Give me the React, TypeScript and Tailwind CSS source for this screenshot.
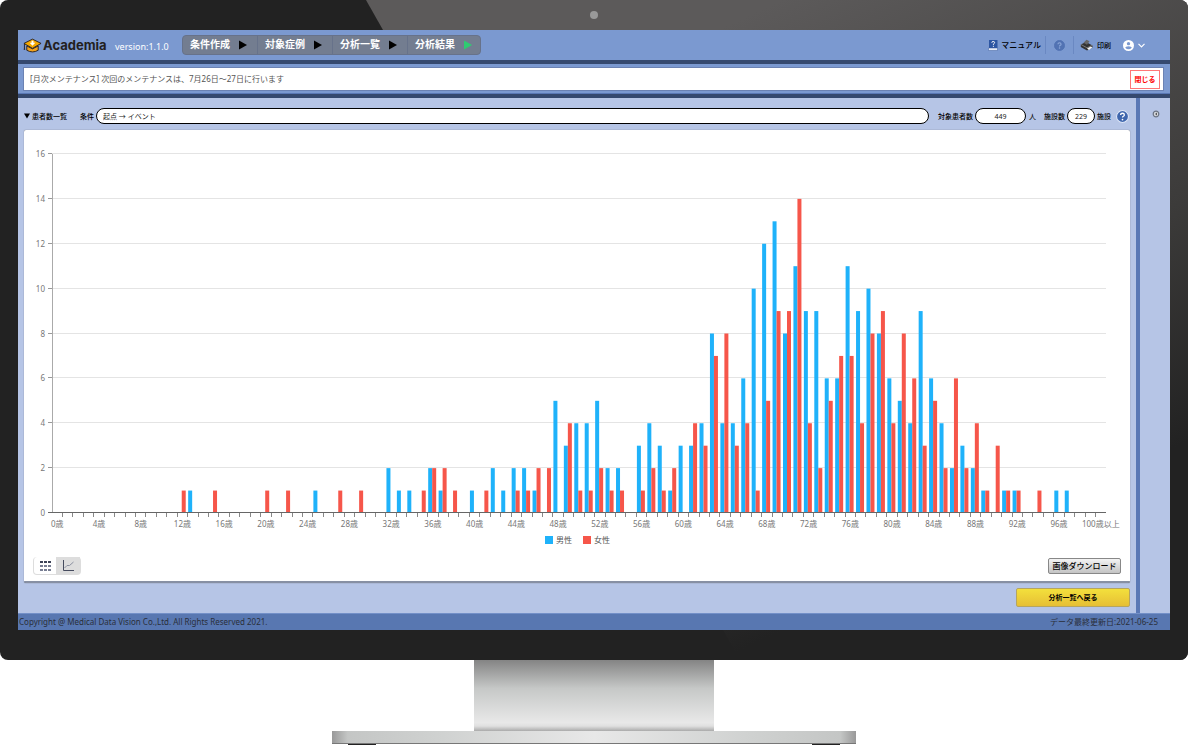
import { FC, ReactNode } from "react"

const men: Record<number, number> = {
  13: 1, 25: 1, 32: 2, 33: 1, 34: 1, 36: 2, 37: 1, 40: 1, 42: 2, 43: 1, 44: 2, 45: 2, 46: 1, 48: 5, 49: 3,
  50: 4, 51: 4, 52: 5, 53: 2, 54: 2, 56: 3, 57: 4, 58: 3, 59: 1, 60: 3, 61: 3, 62: 4, 63: 8, 64: 4, 65: 4,
  66: 6, 67: 10, 68: 12, 69: 13, 70: 8, 71: 11, 72: 9, 73: 9, 74: 6, 75: 6, 76: 11, 77: 9, 78: 10, 79: 8,
  80: 6, 81: 5, 82: 4, 83: 9, 84: 6, 85: 4, 86: 2, 87: 3, 88: 2, 89: 1, 91: 1, 92: 1, 96: 1, 97: 1
}

const women: Record<number, number> = {
  12: 1, 15: 1, 20: 1, 22: 1, 27: 1, 29: 1, 35: 1, 36: 2, 37: 2, 38: 1, 41: 1, 44: 1, 45: 1, 46: 2, 47: 2,
  49: 4, 50: 1, 51: 1, 52: 2, 53: 1, 54: 1, 56: 1, 57: 2, 58: 1, 59: 2, 61: 4, 62: 3, 63: 7, 64: 8, 65: 3,
  66: 4, 67: 1, 68: 5, 69: 9, 70: 9, 71: 14, 72: 4, 73: 2, 74: 5, 75: 7, 76: 7, 77: 4, 78: 8, 79: 9, 80: 4,
  81: 8, 82: 6, 83: 3, 84: 5, 85: 2, 86: 6, 87: 2, 88: 4, 89: 1, 90: 3, 91: 1, 92: 1, 94: 1
}

const steps = ["条件作成", "対象症例", "分析一覧", "分析結果"]

const Logo: FC = () => (
  <a href="#" className="flex items-center gap-px text-[#231f20]">
    <svg width="19" height="15" viewBox="0 0 20 15">
      <path d="M4 8v4.500q6 3.500 12 0V8l-6 3z" fill="#f3a21b" stroke="#2b2320" />
      <path d="M10 .8 19 5.300 10 10.500 1 5.300z" fill="#f5a800" stroke="#2b2320" />
      <path d="M1.500 5.500v6M.8 11.500h1.500" stroke="#2b2320" />
      <path d="M9 2.500h2v2h2L10 7.800 7 4.500h2z" fill="#fff" />
    </svg>
    <span className="w-16 font-[Inter,sans-serif] text-[13px] font-bold leading-4">Academia</span>
  </a>
)

const HelpIcon: FC<{ size: number; fill: string; color: string; ring?: string }> = ({ size, fill, color, ring }) => (
  <svg width={size} height={size} viewBox="0 0 12 12">
    <circle cx="6" cy="6" r="5.500" fill={fill} stroke={ring ?? fill} />
    <path d="M4.300 4.700q0-1.700 1.700-1.700t1.700 1.500q0 .8-.9 1.300-.8.500-.8 1.200" fill="none" stroke={color} strokeWidth="1.200" />
    <circle cx="6" cy="8.800" r=".8" fill={color} />
  </svg>
)

const Header: FC = () => (
  <header className="flex h-[34px] items-center justify-between border-b-4 border-[#35496f] bg-[#7b99d0] pl-[5px] pr-[25px]">
    <div className="flex items-center">
      <Logo />
      <span className="ml-2 mt-0.5 w-[67px] text-[9px] text-white">version:1.1.0</span>
      <nav className="flex overflow-hidden rounded-sm border border-[#67728a] bg-[#737d90]">
        {steps.map((step, i) => (
          <button key={step} className="flex h-[18px] items-center gap-[9px] border-r border-[#67728a] pl-[7px] pr-2.5 text-[10px] font-bold leading-none text-white last:border-r-0 last:pr-2">
            <span className="mb-0.5">{step}</span>
            <svg width="8" height="10" viewBox="0 0 8 10">
              <path d="M0 0.500 8 5 0 9.500z" fill={i === 3 ? "#2ecc71" : "#000"} />
            </svg>
          </button>
        ))}
      </nav>
    </div>
    <div className="flex items-center text-black">
      <a href="#" className="flex items-center gap-[3px] pr-1 text-[8px] font-medium">
        <svg width="10" height="11" viewBox="0 0 10 11">
          <path d="M1 0h8.500v8H1z" fill="#2d56a3" />
          <path d="M.5 8h9v2.500h-9z" fill="#e6ebf5" stroke="#3c5ea0" strokeWidth=".5" />
          <path d="M3.800 2.700q0-1.200 1.400-1.200t1.400 1.100q0 .8-1.200 1.500v.7M5.400 5.800v1" fill="none" stroke="#fff" strokeWidth="1" />
        </svg>
        マニュアル
      </a>
      <button aria-label="ヘルプ" className="flex h-[18px] items-center border-x border-[#6a88c2] px-2">
        <HelpIcon size={11} fill="#5273b3" color="#8ea9da" />
      </button>
      <button className="flex items-center gap-1 px-1.5 text-[7px] font-medium">
        <svg width="13" height="12" viewBox="0 0 13 12">
          <path d="M.8 5.500 6 3l6.500 3.500v2L7 11.500.8 8z" fill="#333" />
          <path d="M3.500 3.800 6.500.8l3 1.500-2.500 3.500z" fill="#666" />
          <path d="M7 9.500l3.500-2 2 .8L9 11z" fill="#f4f4f4" />
          <path d="M1 5.500 7 8.800l5.500-2.500" fill="none" stroke="#999" strokeWidth=".7" />
        </svg>
        印刷
      </button>
      <button aria-label="ユーザー" className="ml-1.5 flex items-center gap-1">
        <svg width="11" height="11" viewBox="0 0 12 12">
          <circle cx="6" cy="6" r="6" fill="#fff" />
          <circle cx="6" cy="4" r="1.800" fill="#7b99d0" />
          <path d="M2.500 8.500q0-1.800 3.500-1.800t3.500 1.800Q8 10.200 6 10.200T2.500 8.500" fill="#7b99d0" />
        </svg>
        <svg width="7" height="5" viewBox="0 0 7 5">
          <path d="M.5.8 3.500 3.800 6.500.8" fill="none" stroke="#fff" strokeWidth="1.200" />
        </svg>
      </button>
    </div>
  </header>
)

const Notice: FC = () => (
  <div className="border-b-4 border-[#35496f] bg-[#7b99d0]">
    <div className="border-b border-[#5a78b5] pb-0.5 pl-[5px] pr-1.5 pt-[3px]">
      <div className="flex h-6 items-center justify-between border border-[#6b82b3] bg-white pl-1.5 pr-[3px]">
        <p className="text-[8px] text-[#555]">[月次メンテナンス] 次回のメンテナンスは、7月26日〜27日に行います</p>
        <button className="h-[19px] w-[30px] border border-[#f77] text-[7px] font-bold leading-none text-[#f00]">閉じる</button>
      </div>
    </div>
  </div>
)

type PillProps = {
  id: string
  label: string
  value: string
  className: string
  children?: ReactNode
}

const Pill: FC<PillProps> = ({ id, label, value, className, children }) => (
  <div className={`flex items-center ${className}`}>
    <label htmlFor={id} className="mr-0.5 shrink-0 font-medium">{label}</label>
    <input id={id} readOnly defaultValue={value} className="h-4 w-full min-w-0 rounded-full border border-black bg-white px-1.5 text-[7px] text-[#222]" />
    {children}
  </div>
)

const Toolbar: FC = () => (
  <div className="flex h-8 items-center pl-1.5 pr-px pt-1 text-[7px] text-black">
    <svg width="6" height="6" viewBox="0 0 6 6">
      <path d="M0 .5h6l-3 5z" />
    </svg>
    <h1 className="ml-0.5 w-12 font-medium">患者数一覧</h1>
    <Pill id="condition" label="条件" value="起点 → イベント" className="grow" />
    <Pill id="patients" label="対象患者数" value="449" className="ml-[9px] w-[98px] [&>input]:text-center">
      <span className="ml-[3px] shrink-0">人</span>
    </Pill>
    <Pill id="facilities" label="施設数" value="229" className="ml-2 w-[67px] [&>input]:text-center">
      <span className="ml-0.5 shrink-0 font-medium">施設</span>
    </Pill>
    <button aria-label="説明" className="ml-[5px]">
      <HelpIcon size={13} fill="#3f66ad" color="#fff" ring="#dfe7f7" />
    </button>
  </div>
)

const left = 28
const right = 1082
const base = 383
const step = (right - left) / 101
const unit = 359 / 16

const Chart: FC = () => {
  const ages = Array.from({ length: 101 }, (_, i) => i)
  const bars = (data: Record<number, number>, offset: number, fill: string) =>
    ages.filter((age) => data[age]).map((age) => (
      <rect key={age} x={left + age * step + offset} y={base - data[age] * unit} width="4" height={data[age] * unit} fill={fill} />
    ))

  return (
    <svg viewBox="0 0 1106 425" className="block w-full text-[8px]" fill="#777" role="img">
      {[0, 2, 4, 6, 8, 10, 12, 14, 16].map((n) => {
        const y = Math.round(base - n * unit)
        return (
          <g key={n}>
            {n > 0 && <rect x={left} y={y - 1} width={right - left} height="1" fill="#e4e4e4" />}
            <rect x={left - 4} y={y - 1} width="4" height="1" fill="#999" />
            <text x={left - 7} y={y + 3} textAnchor="end">{n}</text>
          </g>
        )
      })}
      {bars(men, 0.5, "#1fb2fa")}
      {bars(women, 4.5, "#f6564a")}
      <rect x={left} y={base - 359} width="1" height="359" fill="#aaa" />
      <rect x={left - 4} y={base - 1} width={right - left + 4} height="1" fill="#666" />
      {ages.slice(0, 100).map((age) => (
        <rect key={age} x={Math.round(left + (age + 1) * step - 0.5)} y={base} width="1" height="4" fill="#888" />
      ))}
      {ages.filter((age) => age % 4 === 0).map((age) => (
        <text key={age} x={left + (age + 0.5) * step} y={base + 14} textAnchor="middle">
          {age === 100 ? "100歳以上" : `${age}歳`}
        </text>
      ))}
      <rect x="521" y="406" width="8" height="8" fill="#1fb2fa" />
      <text x="532" y="413" fill="#555">男性</text>
      <rect x="559" y="406" width="8" height="8" fill="#f6564a" />
      <text x="570" y="413" fill="#555">女性</text>
    </svg>
  )
}

const ViewSwitch: FC = () => (
  <div className="flex rounded-sm border-x border-b border-[#ddd]">
    <button aria-label="表" className="flex h-[17px] w-[22px] items-center justify-center">
      <svg width="11" height="10" viewBox="0 0 11 10">
        {[0, 4, 8].map((y) => [0, 4, 8].map((x) => (
          <rect key={`${x}-${y}`} x={x} y={y} width="3" height="2" fill={y === 0 ? "#3b4156" : "#777d92"} />
        )))}
      </svg>
    </button>
    <button aria-label="グラフ" className="flex h-[17px] w-6 items-center justify-center bg-[#ddd]">
      <svg width="11" height="11" viewBox="0 0 11 11" fill="none">
        <path d="M.5 0v10.500H11" stroke="#454b5e" />
        <path d="M1.500 8 4 5.500h2.500L10.500 2" stroke="#8b90a0" />
      </svg>
    </button>
  </div>
)

const Screen: FC = () => (
  <div className="flex flex-col bg-[#b6c5e6]">
    <Header />
    <Notice />
    <div className="flex">
      <main className="grow pl-1.5 pr-1.5">
        <div className="-ml-1.5">
          <Toolbar />
        </div>
        <section className="rounded-xs border-b-2 border-[#8790a3] bg-white shadow-[0_0_1px_#555]">
          <Chart />
          <div className="flex items-center justify-between px-[9px] pb-1.5 pt-0.5">
            <ViewSwitch />
            <button className="h-4 w-[73px] rounded-xs border border-[#888] bg-linear-to-b from-[#f4f4f4] to-[#c4c4c4] text-[8px] font-medium leading-none text-black">画像ダウンロード</button>
          </div>
        </section>
        <div className="flex justify-end pb-1.5 pt-[5px]">
          <button className="h-[19px] w-[114px] rounded-xs border border-[#b5a560] bg-linear-to-b from-[#f3e03c] to-[#e6bf35] text-[7px] font-bold leading-none text-black">分析一覧へ戻る</button>
        </div>
      </main>
      <aside className="w-[34px] shrink-0 border-l-4 border-[#5a78b5] pl-3 pt-3">
        <button aria-label="開く" className="block">
          <svg width="8" height="8" viewBox="0 0 8 8">
            <circle cx="4" cy="4" r="2.800" fill="#d5d8de" stroke="#6b7484" strokeWidth="1.200" />
            <path d="M5 2.600v2.800L3 4z" fill="#555" />
          </svg>
        </button>
      </aside>
    </div>
    <footer className="flex h-[17px] items-center justify-between border-t border-[#7390c8] bg-[#5877b1] pl-px pr-3 text-[8px] text-[#2a2f3a]">
      <p>Copyright @ Medical Data Vision Co.,Ltd. All Rights Reserved 2021.</p>
      <p>データ最終更新日:2021-06-25</p>
    </footer>
  </div>
)

export default function App() {
  return (
    <div className="overflow-hidden bg-white pr-px font-['Noto_Sans','Noto_Sans_CJK_JP',sans-serif] leading-none">
      <div className="relative overflow-hidden rounded-lg bg-[#222] px-[18px] pb-[30px]">
        <div className="absolute inset-0 bg-[linear-gradient(155deg,#5c5a5a_30%,#3c3b3a_62%,#222_82%)] [clip-path:polygon(366px_0,100%_0,100%_100%,740px_100%)]" />
        <div className="relative flex h-[30px] items-center justify-center">
          <span className="size-2 rounded-full bg-[#999]" />
        </div>
        <div className="relative">
          <Screen />
        </div>
      </div>
      <div className="mx-auto h-[71px] w-60 bg-[linear-gradient(#848484,#c6c8c7_40%,#e8e8e8_88%,#e0e0e0_93%,#aaa)]" />
      <div className="mx-auto w-[524px]">
        <div className="h-[13px] border-b border-[#777] bg-[linear-gradient(90deg,#999,#c4c6c5_3%,#cfd1d0_20%,#e8e8e8_50%,#cfd1d0_80%,#c4c6c5_97%,#999)]" />
        <div className="flex justify-between px-4">
          <span className="h-px w-7 bg-[#222]" />
          <span className="h-px w-7 bg-[#222]" />
        </div>
      </div>
    </div>
  )
}
